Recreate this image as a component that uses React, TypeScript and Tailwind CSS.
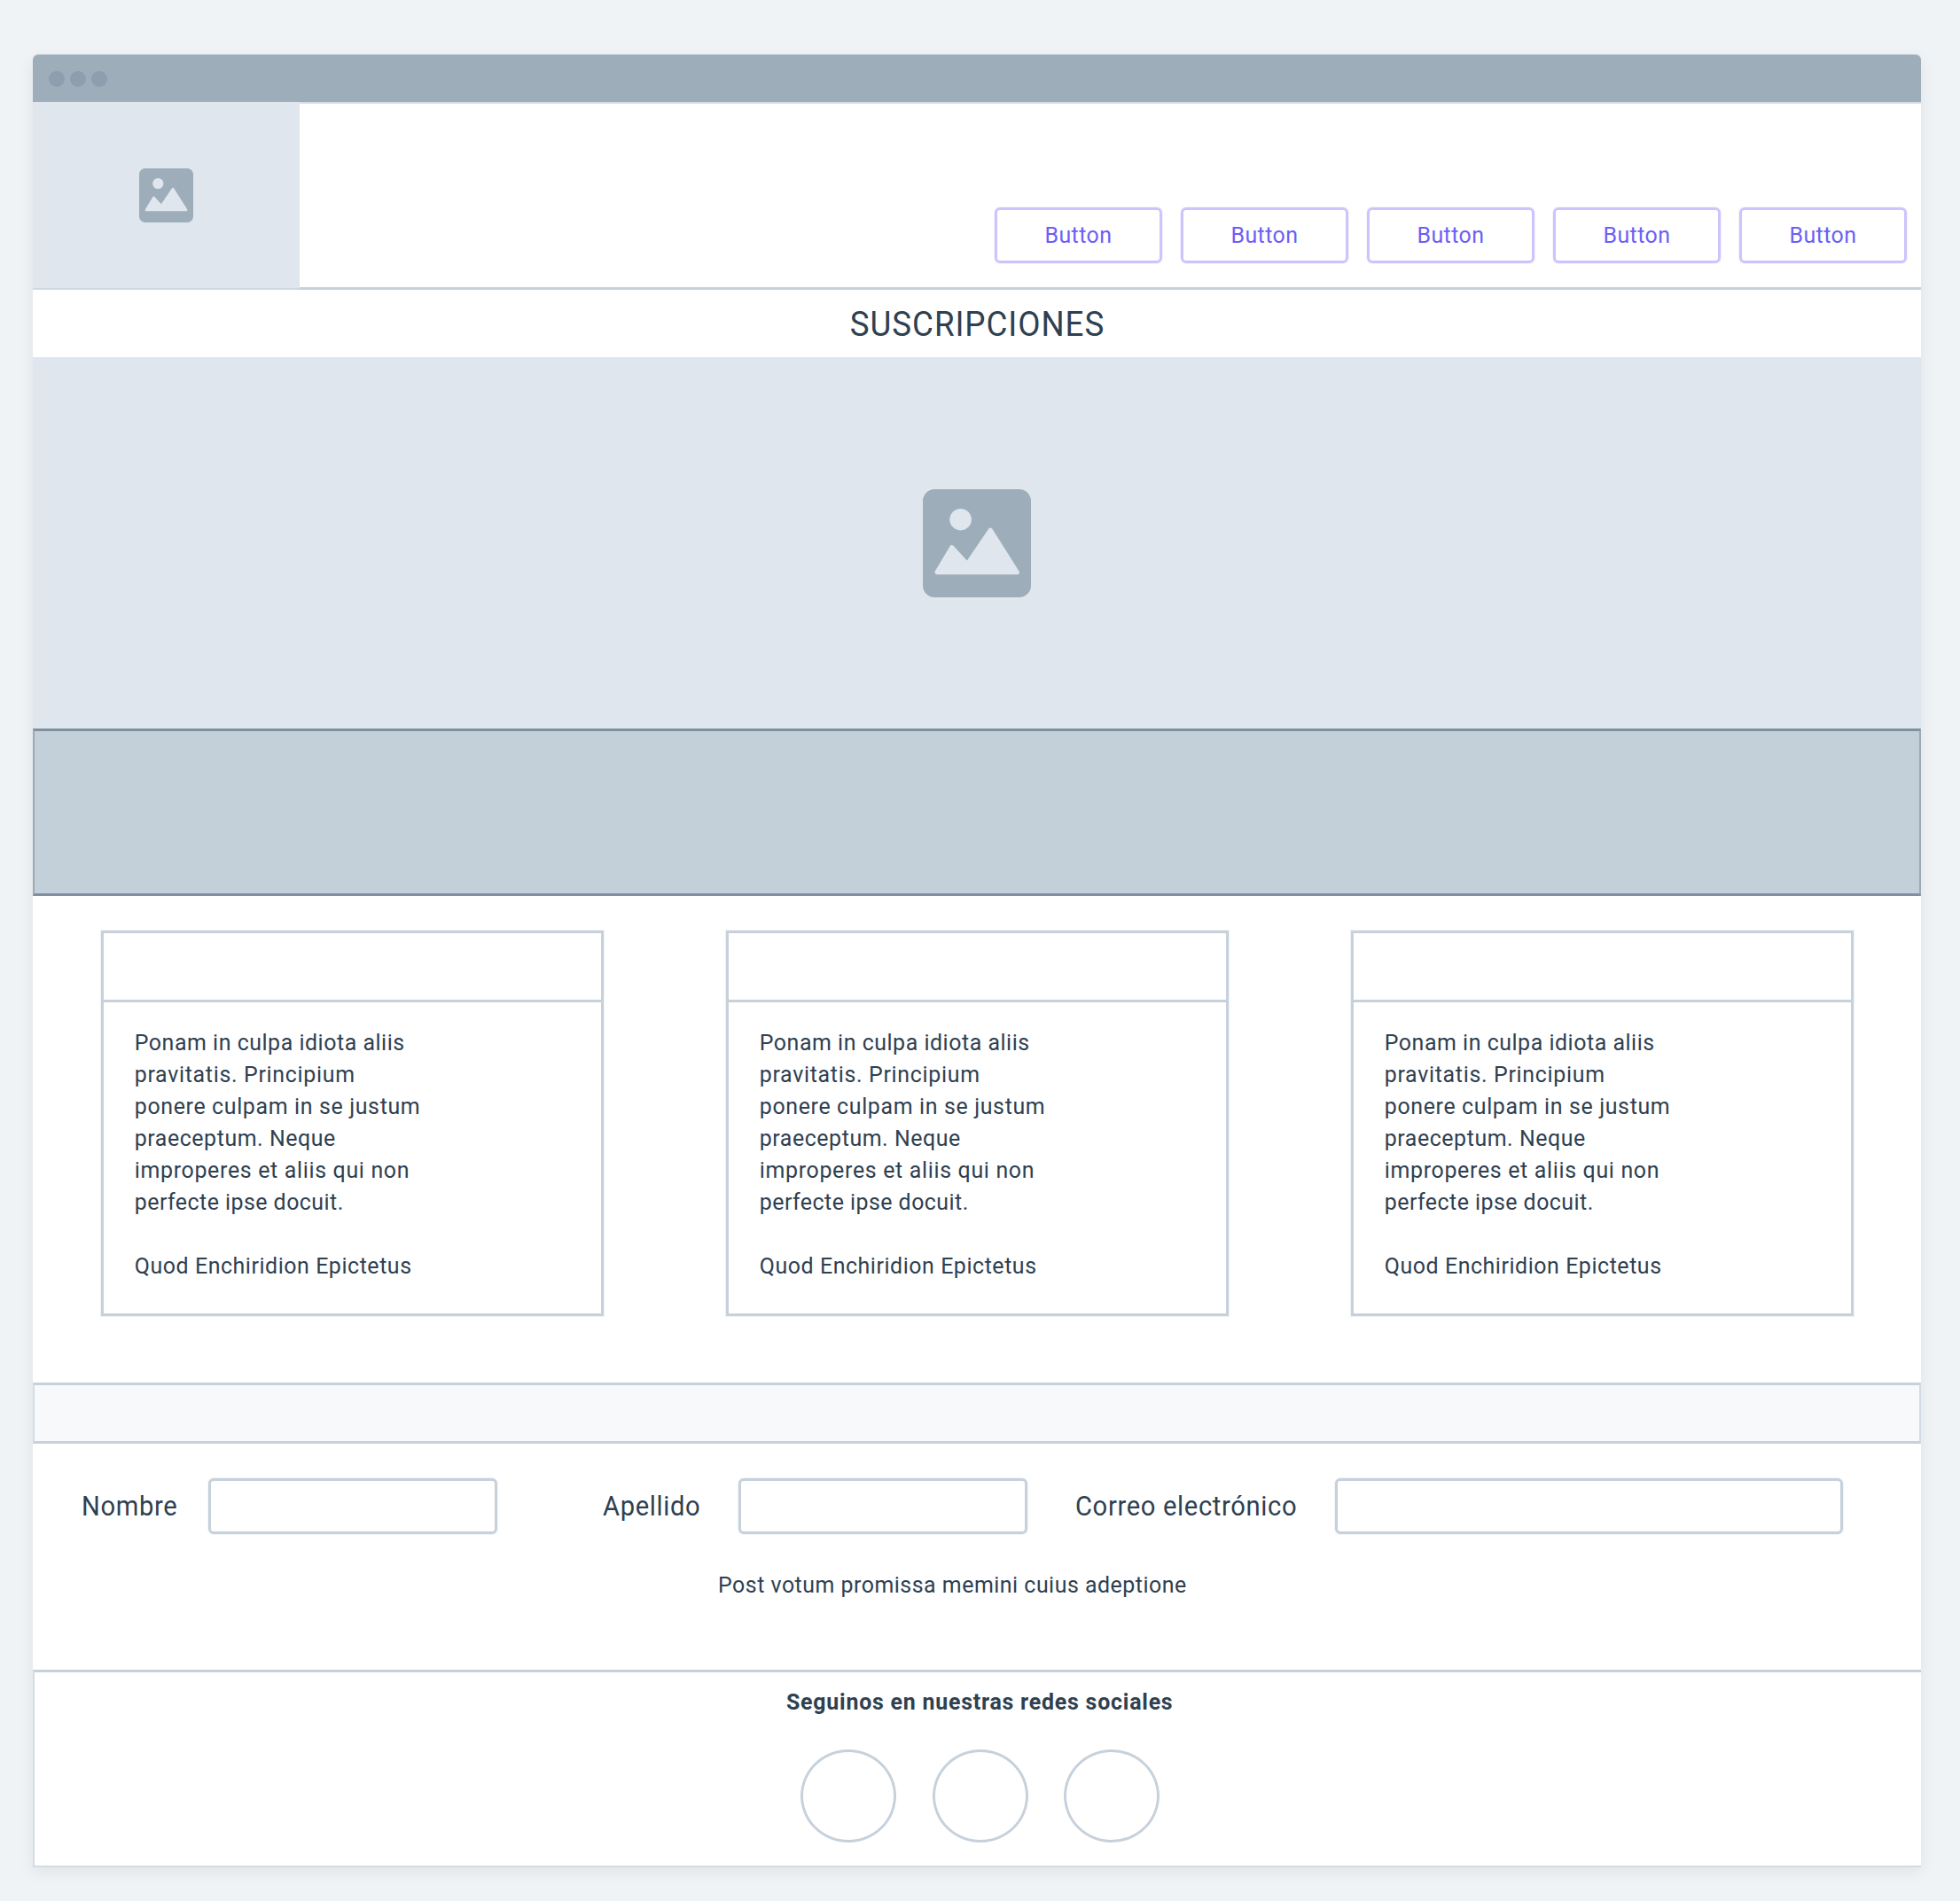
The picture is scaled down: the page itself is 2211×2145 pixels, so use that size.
function Picture({ className }: { className: string }) {
  return (
    <svg viewBox="0 0 368 368" className={className} aria-hidden="true">
      <rect width="368" height="368" rx="40" fill="#9eadba" />
      <circle cx="128.500" cy="103" r="37" fill="#dfe6ee" />
      <path
        d="M48 283 L99 198 L151 255 L230 139 L321 283 Z"
        fill="#dfe6ee"
        stroke="#dfe6ee"
        strokeWidth="15"
        strokeLinejoin="round"
      />
    </svg>
  );
}

const lines = [
  { text: "Ponam in culpa idiota aliis", tracking: "tracking-[0.57px]" },
  { text: "pravitatis. Principium", tracking: "tracking-[0.74px]" },
  { text: "ponere culpam in se justum", tracking: "tracking-[0.69px]" },
  { text: "praeceptum. Neque", tracking: "tracking-[0.6px]" },
  { text: "improperes et aliis qui non", tracking: "tracking-[0.72px]" },
  { text: "perfecte ipse docuit.", tracking: "tracking-[0.5px]" },
  { text: "\u00a0", tracking: "" },
  { text: "Quod Enchiridion Epictetus", tracking: "tracking-[0.6px]" },
];

function Card() {
  return (
    <article className="h-[435px] w-[567px] border-[3px] border-[#c6d1db] shadow-[0_0_0_1px_rgba(197,208,218,0.25)]">
      <div className="h-[78px] border-b-[3px] border-[#c6d1db]" />
      <div className="origin-left scale-x-[0.94] pt-[27px] pl-[37px] text-[26.5px] leading-9">
        {lines.map((line, i) => (
          <p key={i} className={line.tracking}>
            {line.text}
          </p>
        ))}
      </div>
    </article>
  );
}

function Field({ label, labelClass, inputClass }: { label: string; labelClass: string; inputClass: string }) {
  return (
    <label className="flex items-center">
      <span className={`block shrink-0 text-[31px] leading-9 whitespace-nowrap ${labelClass}`}>
        <span className="inline-block origin-left scale-x-[0.94]">{label}</span>
      </span>
      <input
        className={`h-[63px] shrink-0 rounded-[6px] border-[3px] border-[#c6d1db] bg-white shadow-[0_0_0_1px_rgba(197,208,218,0.2)] outline-none ${inputClass}`}
      />
    </label>
  );
}

export default function App() {
  return (
    <div className="min-h-[2145px] bg-[#eff3f6] pt-[62px] pl-[37px] font-['Roboto',sans-serif] text-[#2f4050]">
      <div className="flex h-[2045px] w-[2130px] flex-col rounded-t-[6px] bg-white shadow-[0_5px_18px_rgba(0,0,0,0.065)]">
        <div className="flex h-[53px] shrink-0 items-center gap-[6px] rounded-t-[6px] bg-[#9eadba] pl-[18px] shadow-[0_-1px_0_rgba(158,173,186,0.5)]">
          <span className="size-[18px] rounded-full bg-[#8e9eae]" />
          <span className="size-[18px] rounded-full bg-[#8e9eae]" />
          <span className="size-[18px] rounded-full bg-[#8e9eae]" />
        </div>

        <header className="flex h-[212px] shrink-0">
          <div className="flex w-[301px] shrink-0 items-center justify-center border-b-2 border-[#cfd9e2] bg-[#dfe6ee]">
            <Picture className="size-[61px]" />
          </div>
          <nav className="flex flex-1 items-end justify-end gap-[21px] border-t-2 border-b-[3px] border-t-[#d3dce4] border-b-[#c6d1db] pr-4 pb-[27px]">
            {[0, 1, 2, 3, 4].map((i) => (
              <button
                key={i}
                className="h-[63px] w-[189px] rounded-[6px] border-[3px] border-[#cbc5fc] pb-[2px] text-[26.5px] leading-9 tracking-[0.5px] text-[#6c5ff5] shadow-[0_0_0_1px_rgba(203,197,252,0.2)]"
              >
                <span className="inline-block scale-x-[0.94]">Button</span>
              </button>
            ))}
          </nav>
        </header>

        <h1 className="h-[76px] shrink-0 text-center text-[39.5px] leading-[77px] tracking-[1px]">
          <span className="inline-block scale-x-[0.93]">SUSCRIPCIONES</span>
        </h1>

        <section className="flex h-[419px] shrink-0 items-center justify-center bg-[#dfe6ee]">
          <Picture className="size-[122px]" />
        </section>

        <section className="h-[189px] shrink-0 border-x-2 border-y-[3px] border-x-[#9aa9b7] border-y-[#8090a0] bg-[#c3cfd9]" />

        <section className="flex h-[549px] shrink-0 gap-[138px] pt-[39px] pl-[77px]">
          <Card />
          <Card />
          <Card />
        </section>

        <section className="h-[69px] shrink-0 border-x-2 border-y-[3px] border-x-[#d3dce4] border-y-[#c6d1db] bg-[#f8f9fb]" />

        <form className="h-[255px] shrink-0 pt-[39px]">
          <div className="flex pl-[55px]">
            <Field label="Nombre" labelClass="w-[143px] tracking-[0.7px]" inputClass="w-[326px]" />
            <Field label="Apellido" labelClass="ml-[119px] w-[153px] tracking-[0.7px]" inputClass="w-[326px]" />
            <Field label="Correo electrónico" labelClass="ml-[54px] w-[293px] tracking-[0.7px]" inputClass="w-[573px]" />
          </div>
          <p className="mt-[39px] ml-[773px] origin-left scale-x-[0.94] text-[26.5px] leading-9 tracking-[0.54px]">
            Post votum promissa memini cuius adeptione
          </p>
        </form>

        <footer className="h-[223px] shrink-0 border-t-[3px] border-b-2 border-l-2 border-t-[#c6d1db] border-b-[#d3dce4] border-l-[#d3dce4] pt-[15px] pl-[5px] text-center">
          <p className="text-[26.5px] leading-9 font-bold tracking-[0.83px]">
            <span className="inline-block scale-x-[0.94]">Seguinos en nuestras redes sociales</span>
          </p>
          <div className="mt-9 flex justify-center gap-[40.5px]">
            <span className="h-[105px] w-[108px] rounded-[50%] border-[3px] border-[#c6d1db]" />
            <span className="h-[105px] w-[108px] rounded-[50%] border-[3px] border-[#c6d1db]" />
            <span className="h-[105px] w-[108px] rounded-[50%] border-[3px] border-[#c6d1db]" />
          </div>
        </footer>
      </div>
    </div>
  );
}
